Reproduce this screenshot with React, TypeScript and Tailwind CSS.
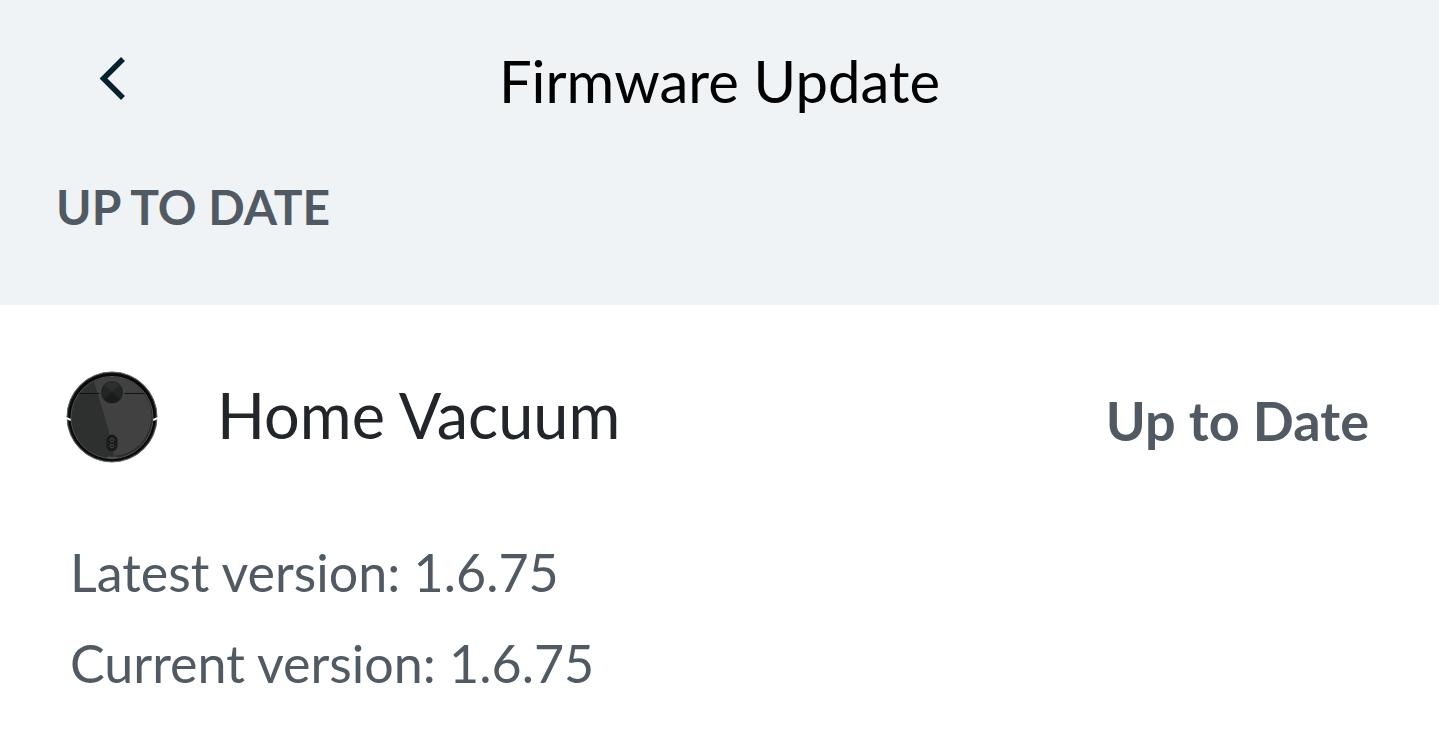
import React from "react";

type TDevice = {
  name: string;
  status: string;
  latestVersion: string;
  currentVersion: string;
};

const device: TDevice = {
  name: "Home Vacuum",
  status: "Up to Date",
  latestVersion: "1.6.75",
  currentVersion: "1.6.75",
};

const BackIcon: React.FC = () => (
  <svg width="32" height="48" viewBox="0 0 32 48" fill="none" aria-hidden="true">
    <path d="M27 4L7.500 23.500L27 43" stroke="#04222e" strokeWidth="5.500" />
  </svg>
);

const VacuumIcon: React.FC = () => (
  <svg
    className="shrink-0"
    width="92"
    height="92"
    viewBox="0 0 92 92"
    fill="none"
    aria-hidden="true"
  >
    {/* bumper */}
    <circle cx="46" cy="46" r="45" fill="#1b1d1c" stroke="#5c5e5d" strokeWidth="1" />
    <circle cx="46" cy="46" r="43.500" fill="#080909" />
    <path d="M0 47L5 49M92 47L87 49" stroke="#ffffff" strokeWidth="2" />
    {/* body */}
    <circle cx="46" cy="46.500" r="41" fill="#2c2e2d" stroke="#4e504f" strokeWidth="1" />
    <circle cx="46" cy="45.500" r="39.500" fill="#414141" />
    <path d="M28 10.500A39.500 39.500 0 0 0 48 85L42 57Z" fill="#2d302f" />
    <path d="M13.500 22.500H35M57 22.500H78.500" stroke="#111312" strokeWidth="1.200" />
    {/* lidar */}
    <circle cx="46" cy="22" r="12" fill="#343635" stroke="#4c4e4d" strokeWidth="1" />
    <circle cx="46" cy="21" r="11" fill="#222524" />
    <path d="M46 21L38 13.500A11 11 0 0 1 54 13.500Z" fill="#2b2e2d" />
    <path d="M46 21L38 28.500A11 11 0 0 0 54 28.500Z" fill="#191c1b" />
    {/* buttons */}
    <rect x="41" y="64" width="10" height="16" rx="5" fill="#1c1e1d" stroke="#151716" />
    <rect x="44.500" y="67.500" width="3" height="3" rx="1" stroke="#4b4d4c" />
    <rect x="44.500" y="73.500" width="3" height="3" rx="1" stroke="#4b4d4c" />
    <path d="M41 86.500H51" stroke="#525453" strokeWidth="1.500" />
  </svg>
);

const App: React.FC = () => {
  return (
    <div className="min-h-screen bg-white font-['Lato',sans-serif] text-[#515a63]">
      {/* header */}
      <header className="bg-[#eff3f6] px-14 pt-12 pb-16">
        <div className="grid grid-cols-[1fr_auto_1fr] items-center">
          <button type="button" aria-label="Back" className="mb-1 w-max cursor-pointer pl-10">
            <BackIcon />
          </button>
          <h1 className="text-[58px] leading-[66px] text-black">Firmware Update</h1>
        </div>
        <h2 className="mt-[59px] text-[48px] leading-[68px] font-bold">UP TO DATE</h2>
      </header>

      {/* device */}
      <main className="px-[66px] pt-[66px] pb-8">
        <div className="flex items-center">
          <VacuumIcon />
          <div className="mb-1 ml-[59px] text-[63px] leading-[88px] text-[#22262b]">
            {device.name}
          </div>
          <div className="mt-2 mr-1 ml-auto text-[54px] leading-[84px] font-bold">
            {device.status}
          </div>
        </div>
        <div className="mt-16 ml-1 text-[52px] leading-[91px]">
          <p>Latest version: {device.latestVersion}</p>
          <p>Current version: {device.currentVersion}</p>
        </div>
      </main>
    </div>
  );
};

export default App;
